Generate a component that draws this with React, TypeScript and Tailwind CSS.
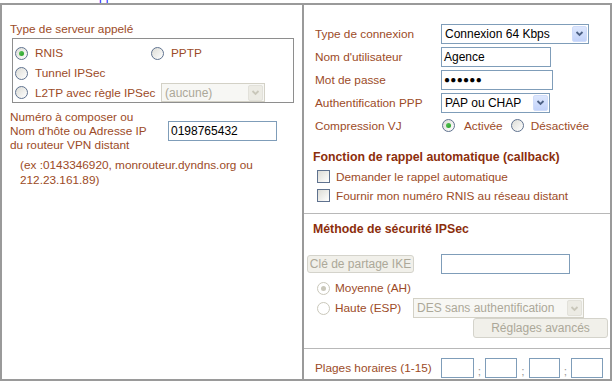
import React from "react";

const LBL = "text-[#9c4b27]";
const BOLD = "text-[#8c2e0c] font-bold text-[12.3px]";

function Radio({ checked = false, disabled = false }: { checked?: boolean; disabled?: boolean }) {
  return (
    <span
      className={
        disabled
          ? "relative inline-block shrink-0 w-[13px] h-[13px] rounded-full border border-[#cac8bb] bg-white"
          : "relative inline-block shrink-0 w-[13px] h-[13px] rounded-full border border-[#5f728f] bg-gradient-to-br from-[#dcdcd6] to-white"
      }
    >
      {checked && (
        <span
          className={
            disabled
              ? "absolute left-[3px] top-[3px] w-[5px] h-[5px] rounded-full bg-[#cac8bb]"
              : "absolute left-[3px] top-[3px] w-[5px] h-[5px] rounded-full bg-gradient-to-br from-[#5ac45a] to-[#21a121]"
          }
        />
      )}
    </span>
  );
}

function Check() {
  return (
    <span className="inline-block shrink-0 w-[13px] h-[13px] border border-[#5f728f] bg-gradient-to-br from-[#dcdcd6] to-white" />
  );
}

function Chevron({ disabled = false }: { disabled?: boolean }) {
  return (
    <span
      className={
        disabled
          ? "flex items-center justify-center shrink-0 w-[15px] h-[16px] mr-px rounded-[2px] bg-[#ecebe4] border border-[#e2e1da]"
          : "flex items-center justify-center shrink-0 w-[15px] h-[16px] mr-px rounded-[2px] bg-gradient-to-b from-[#dde7fd] to-[#c3d3fa] border border-[#cfdcfa]"
      }
    >
      <svg width="9" height="9" viewBox="0 0 9 9">
        <path
          d="M1.5 3 L4.5 6 L7.5 3"
          fill="none"
          stroke={disabled ? "#c9c7ba" : "#4d6185"}
          strokeWidth="1.8"
        />
      </svg>
    </span>
  );
}

function Select({ value, className, disabled = false }: { value: string; className: string; disabled?: boolean }) {
  return (
    <div
      className={
        (disabled
          ? "flex items-center border border-[#d3d1c6] bg-[#f7f7f4] text-[#aca899] "
          : "flex items-center border border-[#7f9db9] bg-white text-black ") + className
      }
    >
      <span className="flex-1 pl-[3px] text-[12px] leading-[14px] whitespace-nowrap overflow-hidden">{value}</span>
      <Chevron disabled={disabled} />
    </div>
  );
}

function Input({ value, className, children }: { value?: string; className: string; children?: React.ReactNode }) {
  return (
    <div className={"flex items-center border border-[#7f9db9] bg-white text-black pl-[2px] text-[12px] leading-[14px] " + className}>
      {value}
      {children}
    </div>
  );
}

function Button({ label, className }: { label: string; className: string }) {
  return (
    <div
      className={
        "flex items-center justify-center rounded-[3px] border border-[#d4d3cb] bg-[#f1f0ea] text-[#aca899] text-[12px] leading-[14px] whitespace-nowrap " +
        className
      }
    >
      {label}
    </div>
  );
}

export default function App() {
  return (
    <div
      className="w-[612px] h-[382px] bg-white overflow-hidden text-[11.8px] leading-[14px]"
      style={{ fontFamily: '"Liberation Sans", Arial, sans-serif' }}
    >
      <div className="h-[3px] overflow-hidden pl-[99px]">
        <span className="block text-[#1a1aff] text-[12px] leading-[12px] -mt-[10px]">pp</span>
      </div>
      <div className="flex h-[378px] border-2 border-[#9a9a9a]">
        {/* Left column */}
        <div className={"w-[302px] shrink-0 border-r-2 border-[#9a9a9a] flex flex-col " + LBL}>
          <div className="mt-[17px] ml-[8px]">Type de serveur appelé</div>
          <div className="mt-[2px] ml-[10px] w-[282px] border border-[#8e8e8e] pt-[4px]">
            <div className="flex h-[20px] items-center pl-[2px]">
              <label className="w-[136px] flex items-center gap-[7px]">
                <Radio checked />
                <span>RNIS</span>
              </label>
              <label className="flex items-center gap-[7px]">
                <Radio />
                <span>PPTP</span>
              </label>
            </div>
            <div className="flex h-[20px] items-center pl-[2px]">
              <label className="flex items-center gap-[7px]">
                <Radio />
                <span>Tunnel IPSec</span>
              </label>
            </div>
            <div className="flex h-[19px] items-center pl-[2px]">
              <label className="w-[146px] shrink-0 flex items-center gap-[7px] whitespace-nowrap">
                <Radio />
                <span>L2TP avec règle IPSec</span>
              </label>
              <Select value="(aucune)" disabled className="w-[104px] h-[19px]" />
            </div>
          </div>
          <div className="mt-[7px] ml-[8px] flex items-center">
            <div className="w-[158px] shrink-0 whitespace-nowrap">
              Numéro à composer ou
              <br />
              Nom d'hôte ou Adresse IP
              <br />
              du routeur VPN distant
            </div>
            <Input value="0198765432" className="w-[109px] h-[20px]" />
          </div>
          <div className="mt-[6px] ml-[18px] leading-[15px] whitespace-nowrap">
            (ex :0143346920, monrouteur.dyndns.org ou
            <br />
            212.23.161.89)
          </div>
        </div>

        {/* Right column */}
        <div className={"flex-1 flex flex-col " + LBL}>
          <div className="pt-[17px]">
            <div className="flex items-center h-[23px] pl-[11px]">
              <span className="w-[126px] shrink-0">Type de connexion</span>
              <Select value="Connexion 64 Kbps" className="w-[148px] h-[20px]" />
            </div>
            <div className="flex items-center h-[23px] pl-[11px]">
              <span className="w-[126px] shrink-0">Nom d'utilisateur</span>
              <Input value="Agence" className="w-[110px] h-[20px]" />
            </div>
            <div className="flex items-center h-[23px] pl-[11px]">
              <span className="w-[126px] shrink-0">Mot de passe</span>
              <Input className="w-[112px] h-[20px]">
                <span className="text-[10px] tracking-[0.3px] leading-[12px]">●●●●●●</span>
              </Input>
            </div>
            <div className="flex items-center h-[23px] pl-[11px]">
              <span className="w-[126px] shrink-0">Authentification PPP</span>
              <Select value="PAP ou CHAP" className="w-[109px] h-[20px]" />
            </div>
            <div className="flex items-center h-[23px] pl-[11px]">
              <span className="w-[127px] shrink-0">Compression VJ</span>
              <label className="flex items-center gap-[9px]">
                <Radio checked />
                <span>Activée</span>
              </label>
              <label className="flex items-center gap-[7px] ml-[8px]">
                <Radio />
                <span>Désactivée</span>
              </label>
            </div>
          </div>

          <div className={"mt-[13px] pl-[9px] whitespace-nowrap " + BOLD}>Fonction de rappel automatique (callback)</div>
          <div className="mt-[3px] pl-[13px]">
            <label className="flex items-center gap-[6px] h-[19px]">
              <Check />
              <span>Demander le rappel automatique</span>
            </label>
            <label className="flex items-center gap-[6px] h-[19px]">
              <Check />
              <span>Fournir mon numéro RNIS au réseau distant</span>
            </label>
          </div>

          <div className="mt-[8px] border-t border-[#b8b8b8]" />

          <div className={"mt-[8px] pl-[9px] " + BOLD}>Méthode de sécurité IPSec</div>

          <div className="mt-[18px] flex items-center h-[20px] pl-[3px]">
            <Button label="Clé de partage IKE" className="w-[107px] h-[18px]" />
            <Input className="ml-[27px] w-[129px] h-[20px]" />
          </div>
          <div className="mt-[4px] flex items-center h-[20px] pl-[13px] gap-[5px]">
            <Radio checked disabled />
            <span>Moyenne (AH)</span>
          </div>
          <div className="flex items-center h-[20px] pl-[13px]">
            <label className="w-[96px] shrink-0 flex items-center gap-[5px]">
              <Radio disabled />
              <span>Haute (ESP)</span>
            </label>
            <Select value="DES sans authentification" disabled className="w-[171px] h-[20px]" />
          </div>
          <div className="flex justify-end pr-[2px] h-[20px]">
            <Button label="Réglages avancés" className="w-[135px] h-[20px]" />
          </div>

          <div className="mt-[10px] border-t border-[#b8b8b8]" />

          <div className="pt-[9px] flex items-center h-[29px] pl-[11px]">
            <span className="w-[126px] shrink-0">Plages horaires (1-15)</span>
            <Input className="w-[33px] h-[20px]" />
            <span className="w-[11px] text-center text-[#999] self-end">;</span>
            <Input className="w-[32px] h-[20px]" />
            <span className="w-[12px] text-center text-[#999] self-end">;</span>
            <Input className="w-[31px] h-[20px]" />
            <span className="w-[11px] text-center text-[#999] self-end">;</span>
            <Input className="w-[32px] h-[20px]" />
          </div>
        </div>
      </div>
    </div>
  );
}
